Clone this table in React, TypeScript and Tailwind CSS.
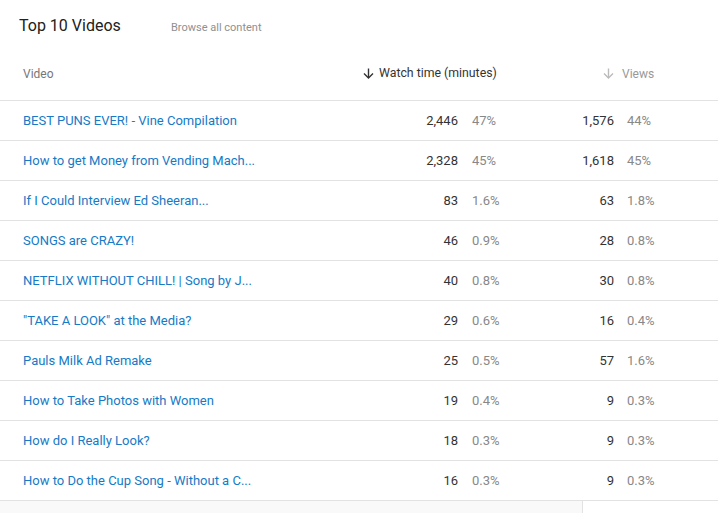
import React from "react";

type Row = {
  title: string;
  watch: string;
  watchPct: string;
  views: string;
  viewsPct: string;
};

const rows: Row[] = [
  { title: "BEST PUNS EVER! - Vine Compilation", watch: "2,446", watchPct: "47%", views: "1,576", viewsPct: "44%" },
  { title: "How to get Money from Vending Mach...", watch: "2,328", watchPct: "45%", views: "1,618", viewsPct: "45%" },
  { title: "If I Could Interview Ed Sheeran...", watch: "83", watchPct: "1.6%", views: "63", viewsPct: "1.8%" },
  { title: "SONGS are CRAZY!", watch: "46", watchPct: "0.9%", views: "28", viewsPct: "0.8%" },
  { title: "NETFLIX WITHOUT CHILL! | Song by J...", watch: "40", watchPct: "0.8%", views: "30", viewsPct: "0.8%" },
  { title: "\"TAKE A LOOK\" at the Media?", watch: "29", watchPct: "0.6%", views: "16", viewsPct: "0.4%" },
  { title: "Pauls Milk Ad Remake", watch: "25", watchPct: "0.5%", views: "57", viewsPct: "1.6%" },
  { title: "How to Take Photos with Women", watch: "19", watchPct: "0.4%", views: "9", viewsPct: "0.3%" },
  { title: "How do I Really Look?", watch: "18", watchPct: "0.3%", views: "9", viewsPct: "0.3%" },
  { title: "How to Do the Cup Song - Without a C...", watch: "16", watchPct: "0.3%", views: "9", viewsPct: "0.3%" },
];

function DownArrow({ color }: { color: string }) {
  return (
    <svg width="11" height="11" viewBox="0 0 11 11" fill="none" stroke={color} strokeWidth="1.4">
      <path d="M5.5 0.5v9.5" />
      <path d="M1 5.5l4.5 4.5 4.5-4.5" />
    </svg>
  );
}

export default function App() {
  return (
    <div className="w-[718px] h-[513px] overflow-hidden bg-white font-['Roboto',sans-serif] flex flex-col">
      <div className="h-[51px] shrink-0 flex items-start pt-[16px]">
        <h1 className="pl-[19px] w-[171px] text-[16px] leading-[20px] text-[#212121]">Top 10 Videos</h1>
        <a className="text-[11px] leading-[20px] mt-[2px] text-[#909090]">Browse all content</a>
      </div>

      <div className="h-[50px] shrink-0 flex items-center border-b border-[#e2e2e2] text-[12px] pb-[4px]">
        <div className="pl-[23px] w-[363px] text-[#777]">Video</div>
        <div className="w-[240px] flex items-center gap-[5px] text-[#333] text-[12.3px]">
          <DownArrow color="#333" />
          <span>Watch time (minutes)</span>
        </div>
        <div className="flex items-center gap-[8px] text-[#999]">
          <DownArrow color="#bbb" />
          <span>Views</span>
        </div>
      </div>

      {rows.map((r) => (
        <div
          key={r.title}
          className="h-[40px] shrink-0 grid grid-cols-[355px_80px_98px_58px_1fr] items-center pl-[23px] border-b border-[#e2e2e2] text-[13px]"
        >
          <a className="text-[#167ac6] whitespace-nowrap">{r.title}</a>
          <span className="text-right text-[#333]">{r.watch}</span>
          <span className="pl-[14px] text-[#888]">{r.watchPct}</span>
          <span className="text-right text-[#333]">{r.views}</span>
          <span className="pl-[13px] text-[#888]">{r.viewsPct}</span>
        </div>
      ))}

      <div className="flex-1 flex">
        <div className="w-[583px] bg-[#f9f9f9] border-r border-[#e2e2e2]" />
        <div className="flex-1" />
      </div>
    </div>
  );
}
